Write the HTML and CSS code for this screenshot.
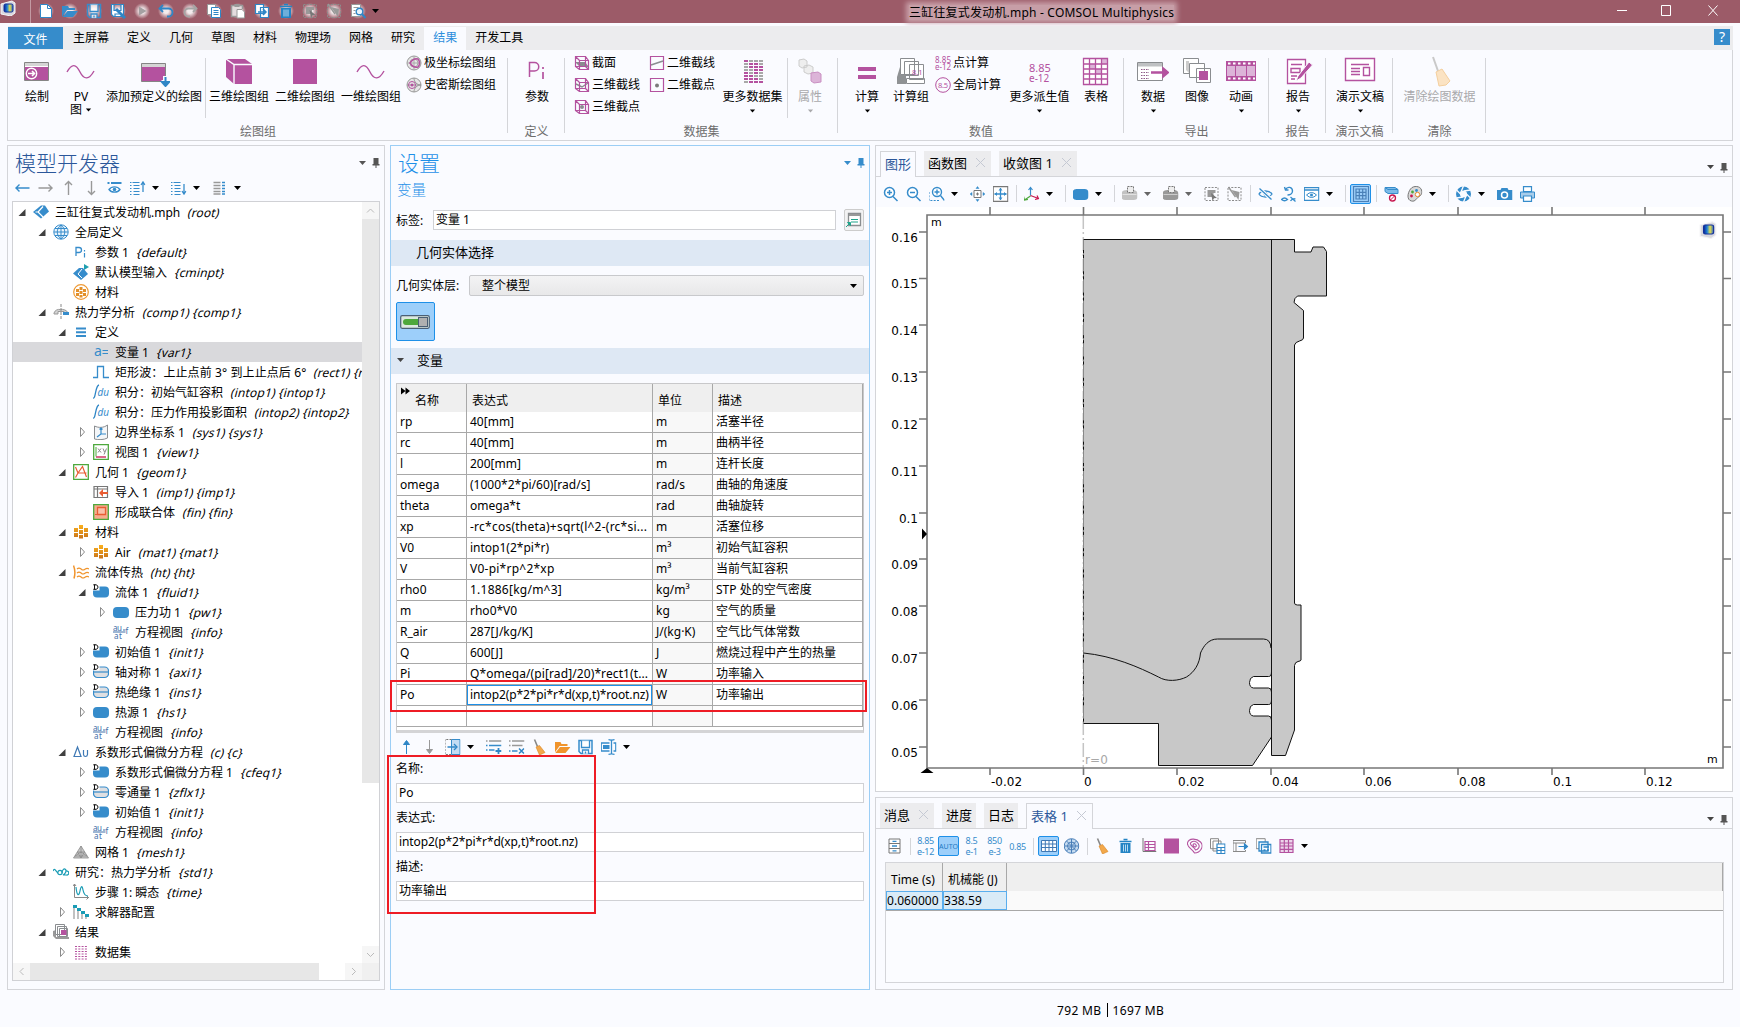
FILE: index.html
```html
<!DOCTYPE html>
<html lang="zh-CN">
<head>
<meta charset="utf-8">
<title>三缸往复式发动机.mph - COMSOL Multiphysics</title>
<link rel="stylesheet" href="styles.css">
</head>
<body>
<svg class="grads" aria-hidden="true">
  <defs>
    <linearGradient id="lg" x1="0" x2="1"><stop offset="0" stop-color="#0b1f8c"/><stop offset=".35" stop-color="#1c7fd8"/><stop offset=".65" stop-color="#e9e04a"/><stop offset="1" stop-color="#2b66c8"/></linearGradient>
    <linearGradient id="mat" x1="0" x2="0" y1="0" y2="1"><stop offset="0" stop-color="#fbb01c"/><stop offset="1" stop-color="#c8731a"/></linearGradient>
  </defs>
</svg>
<svg class="defs" aria-hidden="true">
  <symbol id="logo" viewBox="0 0 16 16"><path d="M1 4L12 1l3 2v10l-4 3-10-2z" fill="#d9d9de" stroke="#f4f4f6"/><rect x="4" y="4" width="9" height="8" rx="1.500" fill="url(#lg)" stroke="#12309c"/></symbol>
  <symbol id="caret" viewBox="0 0 9 16"><path d="M1 6h7L4.500 10z"/></symbol>
  <symbol id="pin" viewBox="0 0 10 16"><path d="M2.500 3h5v6h1v1.500h-3V13h-1v-2.500h-3V9h1z" fill="currentColor"/></symbol>
  <symbol id="open-tw" viewBox="0 0 10 16"><path d="M8.500 5v7h-7z" fill="#404040"/></symbol>
  <symbol id="shut-tw" viewBox="0 0 10 16"><path d="M3.500 3.500v9L7.500 8z" fill="#fff" stroke="#8a8a8a"/></symbol>
  <symbol id="new" viewBox="0 0 16 16"><path d="M2.500 1.500h7l4 4v9h-11z" fill="#fff" stroke="#2f86c6"/><path d="M9.500 1.500v4h4" fill="none" stroke="#2f86c6"/></symbol>
  <symbol id="open" viewBox="0 0 16 16"><path d="M0 3h6l1 2h6v2H5l-5 7z"/><path d="M5.500 8H16l-5 6H.800z"/></symbol>
  <symbol id="save" viewBox="0 0 16 16"><path d="M1.500 1.500h13v13h-11l-2-2z" fill="none" stroke="currentColor" stroke-width="1.500"/><path d="M4 1.500v7h8v-7M5 15v-4h6v4M8 12.500v2" fill="#fff" fill-opacity=".7" stroke="currentColor" stroke-width="1.300"/></symbol>
  <symbol id="saveas" viewBox="0 0 16 16"><path d="M1.500 1.500h12v12h-10l-2-2zM4 1.500v6h7v-6M5 14v-3h4" fill="#fff" stroke="#2f86c6" stroke-width="1.200"/><path d="M6 6l9 9" stroke="#2f86c6" stroke-width="3"/></symbol>
  <symbol id="play" viewBox="0 0 16 16"><path d="M5 3.500v9L12.500 8z" fill="#a5a0a2"/></symbol>
  <symbol id="undo" viewBox="0 0 16 16"><path d="M5 2L1.500 5.500 5 9M2 5.500h8.500a3.800 3.800 0 010 8H9" fill="none" stroke="#2f86c6" stroke-width="1.800"/></symbol>
  <symbol id="redo" viewBox="0 0 16 16"><path d="M11 2l3.500 3.500L11 9M14 5.500H6.500a3.800 3.800 0 000 8H8" fill="none" stroke="#a5a5a5" stroke-width="1.800"/></symbol>
  <symbol id="copy" viewBox="0 0 16 16"><path d="M1.500 1.500h8v10h-8z" fill="#fff" stroke="#999"/><path d="M5.500 4.500h7l2 2v8h-9z" fill="#fff" stroke="#2f86c6"/><path d="M7.500 7.500h5m-5 2h5m-5 2h5" stroke="#2f86c6"/></symbol>
  <symbol id="paste" viewBox="0 0 16 16"><path d="M6.500 13.500h-5v-11h11V6" fill="#e4dcde" stroke="#999" stroke-width="1.500"/><path d="M4.500 1h5v3h-5z" fill="#999"/><path d="M7 6.500h5l2.500 2.500v6H7z" fill="#fff" stroke="#999"/></symbol>
  <symbol id="dup" viewBox="0 0 16 16"><path d="M1.500 1.500h8v9h-8zM6.500 4.500h8v10h-8z" fill="#fff" stroke="#2f86c6" stroke-width="1.200"/><path d="M4 9h7M9 6l3 3-3 3" fill="none" stroke="#2f86c6" stroke-width="1.500"/></symbol>
  <symbol id="trash" viewBox="0 0 16 16"><path d="M2 3.500h12M6 1.500h4" stroke="#2484c4" stroke-width="1.600"/><path d="M3 5h10v10H3z" fill="#2484c4"/><path d="M6 6.500v7m2-7v7m2-7v7" stroke="#b7daf1"/></symbol>
  <symbol id="sel" viewBox="0 0 16 16"><path d="M1.500 1.500h13v13h-13z" fill="none" stroke="#8c8c8c" stroke-dasharray="2 1.300"/><path d="M4 4h8v3l-2 0v3l-2 1H4z" fill="#999"/><path d="M7.500 7l6 5-3 .3L9 15z" fill="#777"/></symbol>
  <symbol id="desel" viewBox="0 0 16 16"><path d="M1.500 1.500h13v13h-13z" fill="none" stroke="#8c8c8c" stroke-dasharray="2 1.300"/><path d="M5 4l7 10 1-8z" fill="#999"/><path d="M2 1l7 10" stroke="#999" stroke-width="1.500"/></symbol>
  <symbol id="find" viewBox="0 0 16 16"><path d="M1.500 1.500h9v12h-9z" fill="#fff" stroke="#999"/><path d="M3.500 4.500h5m-5 3h2m-2 3h2" stroke="#999"/><circle cx="9.500" cy="8.500" r="3.300" fill="#e8f3fb" stroke="#2f86c6" stroke-width="1.400"/><path d="M12 11l3.500 4" stroke="#2f86c6" stroke-width="2"/></symbol>

  <symbol id="r-plot" viewBox="0 0 32 32"><path d="M3.500 7.500h24v18h-24z" fill="#fff" stroke="#858585"/><path d="M4 8h23v3H4z" fill="#d5d5d5"/><path d="M4 12h23v13H4z" fill="#b4529f"/><circle cx="10.500" cy="18.500" r="5.200" fill="#b4529f" stroke="#fff" stroke-width="1.400"/><path d="M7 18.500h6M11 16l2.500 2.500L11 21" fill="none" stroke="#fff" stroke-width="1.600"/></symbol>
  <symbol id="r-wave" viewBox="0 0 32 32"><path d="M2 17c5-9 9-8 13 0s9 8 14-1" fill="none" stroke="#b4529f" stroke-width="1.400"/></symbol>
  <symbol id="r-add" viewBox="0 0 32 32"><path d="M3.500 8.500h24v18h-24z" fill="#b4529f" stroke="#858585"/><path d="M4 9h23v3H4z" fill="#d5d5d5"/><path d="M27.500 21v10M23.500 27.500h9" fill="none" stroke="#fafbff" stroke-width="5"/><path d="M27.500 22v8M24 27l3.500 4 3.500-4z" fill="#2f86c6" stroke="#2f86c6" stroke-width="2"/></symbol>
  <symbol id="r-cube" viewBox="0 0 32 32"><path d="M3 4h19l7 5v20H11l-8-7z" fill="#b4529f"/><path d="M3 4l8 5.500h18M11 9.500V29" fill="none" stroke="#fafbff" stroke-width="1.400"/></symbol>
  <symbol id="r-sq" viewBox="0 0 32 32"><path d="M4 4h24v25H4z" fill="#b4529f"/></symbol>
  <symbol id="r-pi" viewBox="0 0 32 32"><path d="M8.500 22V7.500h5a4 4 0 010 8.500h-5" fill="none" stroke="#b4529f" stroke-width="1.500"/><path d="M22 12v2m0 3v7" stroke="#b4529f" stroke-width="1.700"/></symbol>
  <symbol id="r-data" viewBox="0 0 32 32"><path d="M7 6h19M7 9h19M7 12h19M7 15h19M7 18h19M7 21h19M7 24h19M7 27h19" stroke="#a8a8a8" stroke-width="1.800" stroke-dasharray="4 1"/><path d="M7 6h4M12 9h9M12 12h14M17 15h9M7 18h4m6 0h4M7 21h9M7 24h4m1 0h9M12 27h14" stroke="#b4529f" stroke-width="1.800" stroke-dasharray="4 1"/></symbol>
  <symbol id="r-attr" viewBox="0 0 32 32"><g stroke="#ccc" fill="#eee"><path d="M5 5l5-1 3 2v6l-5 1-3-2zM10 11l5-1 4 2v6l-5 1-4-2z"/></g><path d="M17 18l7-1 3 2v8l-7 1-3-2z" fill="#dcb4d8" stroke="#c98fc2"/></symbol>
  <symbol id="r-eq" viewBox="0 0 32 32"><path d="M7 14h18M7 22h18" stroke="#b4529f" stroke-width="4"/></symbol>
  <symbol id="r-evg" viewBox="0 0 32 32"><path d="M5 12l-3 10v7h9V12z" fill="#8f9294"/><g fill="#fff" stroke="#8a8d90"><path d="M5.500 3.500h14v16h-14zM9.500 6.500h14v14h-14zM14.500 9.500h14v15h-14zM11.500 23.500h18v5h-18z"/></g><text x="17" y="19.500" font-size="7.500" class="mg">8.1</text></symbol>
  <symbol id="r-num" viewBox="0 0 32 32"><text x="5" y="17" font-size="11" class="mg">8.85</text><text x="5" y="27" font-size="10" class="mg">e-12</text></symbol>
  <symbol id="r-tab" viewBox="0 0 32 32"><path d="M3.500 3.500h24v26h-24z" fill="#fff"/><path d="M21 4h6v5h-6zM9 9h6v5H9zM15 14h6v5h-6z" fill="#dcb4d8"/><path d="M3.500 3.500h24v26h-24zM3.500 9h24M3.500 14h24M3.500 19h24M3.500 24h24M9.500 4v26M15.500 4v26M21.500 4v26" fill="none" stroke="#b4529f" stroke-width="1.300"/></symbol>
  <symbol id="r-exp" viewBox="0 0 32 32"><path d="M.500 7.500h25v18H.500z" fill="#fff" stroke="#8a8d90"/><path d="M1 8h24v3.500H1z" fill="#bfc1c3"/><path d="M4 14.500h8m-8 3h8m-8 3h8m-8 3h8" stroke="#8e5a88" stroke-width="1.200" stroke-dasharray="1.500 1"/><path d="M14 17.500h14M26.500 14l4 3.500-4 3.500z" stroke="#b4529f" stroke-width="2.600" fill="#b4529f"/></symbol>
  <symbol id="r-img" viewBox="0 0 32 32"><g fill="#fff" stroke="#8a8d90"><path d="M2.500 3.500h15v15h-15z"/><path d="M8.500 8.500h15v14h-15zM15.500 13.500h14v14h-14z"/></g><path d="M18 16h9v9h-9z" fill="#b4529f"/><path d="M5 6v9l3 3V6z" fill="#ccc"/></symbol>
  <symbol id="r-film" viewBox="0 0 32 32"><path d="M1 6h30v20H1z" fill="#b4529f"/><path d="M2 11h8v10H2zm9 0h10v10H11zm11 0h8v10h-8z" fill="#dcb4d8"/><path d="M3 8.500h27M3 23.500h27" stroke="#fff" stroke-width="2" stroke-dasharray="2.500 2.500"/></symbol>
  <symbol id="r-rep" viewBox="0 0 32 32"><path d="M5.500 4.500h18v24h-18z" fill="#fff" stroke="#b4529f" stroke-width="1.300"/><path d="M9 9.500h11M9 13.500h9v4H9zM9 21h6m-6 3h4" fill="none" stroke="#b4529f" stroke-width="1.400"/><path d="M14 26l2-5L27 7l3.500 3L19 23z" fill="#b4529f" stroke="#fafbff"/></symbol>
  <symbol id="r-pres" viewBox="0 0 32 32"><path d="M1.500 3.500h29v22h-29z" fill="#fff" stroke="#b4529f" stroke-width="1.400"/><path d="M7 9.500h18M7 13.500h9m-9 3h9m-9 3h9M19.500 12.500h6v8h-6z" fill="none" stroke="#b4529f" stroke-width="1.400"/></symbol>
  <symbol id="r-broom" viewBox="0 0 32 32"><path d="M9 2l5 14" stroke="#c9c9c9" stroke-width="2"/><path d="M12 17l6-3 8 12-4 4-7 1z" fill="#fbe3c3" stroke="#f4cf9e"/></symbol>

  <symbol id="polar" viewBox="0 0 16 16"><circle cx="8" cy="8" r="7" fill="#e6e6e6" stroke="#999"/><circle cx="8" cy="8" r="4" fill="none" stroke="#aaa"/><path d="M8 1v14M1 8h14" stroke="#aaa"/><path d="M4 8c2-3 5-5 8-4 2 2 2 6 0 8-3 1-6-1-8-4z" fill="none" stroke="#b4529f" stroke-width="1.500"/></symbol>
  <symbol id="smith" viewBox="0 0 16 16"><circle cx="8" cy="8" r="7" fill="#e6e6e6" stroke="#999"/><path d="M1 8h14M8 1c0 4 3 7 7 7M8 15c0-4 3-7 7-7" fill="none" stroke="#999"/><circle cx="6" cy="8" r="3.500" fill="none" stroke="#b4529f"/><circle cx="6" cy="8" r="1.500" fill="#b4529f"/></symbol>
  <symbol id="c-box" viewBox="0 0 16 16"><path d="M1.500 1.500h10v10h-10zM5.500 5.500h9v9h-9zM1.500 1.500l4 4M11.500 1.500l3 4M1.500 11.500l4 3M11.500 11.500l3 3" fill="none" stroke="#b4529f" stroke-width="1.200"/></symbol>
  <symbol id="c-sec" viewBox="0 0 16 16"><path d="M1 7h10l4 5H6z" fill="#8a8d90"/><use href="#c-box"/></symbol>
  <symbol id="c-line" viewBox="0 0 16 16"><path d="M2 7l6 3 6-4" fill="none" stroke="#8a8d90" stroke-width="1.500"/><use href="#c-box"/></symbol>
  <symbol id="c-pt" viewBox="0 0 16 16"><circle cx="8" cy="8" r="2" fill="#8a8d90"/><use href="#c-box"/></symbol>
  <symbol id="s-line" viewBox="0 0 16 16"><path d="M1.500 1.500h13v13h-13z" fill="none" stroke="#b4529f" stroke-width="1.200"/><path d="M2 10l12-4" stroke="#8a8d90" stroke-width="1.500"/></symbol>
  <symbol id="s-pt" viewBox="0 0 16 16"><path d="M1.500 1.500h13v13h-13z" fill="none" stroke="#b4529f" stroke-width="1.200"/><circle cx="8" cy="8.500" r="2" fill="#7a7a7a"/></symbol>
  <symbol id="n-pt" viewBox="0 0 16 16"><text x="0" y="7.500" font-size="8" class="mg" textLength="16">8.85</text><text x="0" y="14.500" font-size="8" class="mg" textLength="16">e-12</text></symbol>
  <symbol id="n-gl" viewBox="0 0 16 16"><circle cx="8" cy="8" r="7.300" fill="none" stroke="#b4529f"/><text x="3" y="11" font-size="7.500" class="mg" textLength="10">8.5</text></symbol>

  <symbol id="a-l" viewBox="0 0 16 16"><path d="M1 8h14M5 4.500L1.500 8 5 11.500" fill="none" stroke="currentColor" stroke-width="1.400"/></symbol>
  <symbol id="a-r" viewBox="0 0 16 16"><path d="M1 8h14M11 4.500L14.500 8 11 11.500" fill="none" stroke="currentColor" stroke-width="1.400"/></symbol>
  <symbol id="a-u" viewBox="0 0 16 16"><path d="M8 15V1.500M4.500 5L8 1.500 11.500 5" fill="none" stroke="currentColor" stroke-width="1.400"/></symbol>
  <symbol id="a-d" viewBox="0 0 16 16"><path d="M8 1v13.500M4.500 11L8 14.500l3.500-3.500" fill="none" stroke="currentColor" stroke-width="1.400"/></symbol>
  <symbol id="f-u" viewBox="0 0 16 16"><path d="M8 15V3M8 1.500L5 5.500h6z" fill="#2f86c6" stroke="#2f86c6"/></symbol>
  <symbol id="f-d" viewBox="0 0 16 16"><path d="M8 1v12M8 14.500l-3-4h6z" fill="#999" stroke="#999"/></symbol>
  <symbol id="show" viewBox="0 0 16 16"><path d="M1 3h2m1.500 0H15" stroke="#368ccb" stroke-width="2"/><path d="M2.500 9.500C5 6 11 6 13.500 9.500 11 13 5 13 2.500 9.500z" fill="#fff" stroke="#368ccb" stroke-width="1.300"/><circle cx="8" cy="9.500" r="1.800" fill="#368ccb"/></symbol>
  <symbol id="l-up" viewBox="0 0 16 16"><path d="M0 2.500h2m1 0h7M0 5.500h2m2 0h6M0 8.500h2m2 0h6M0 11.500h2m2 0h6M0 14.500h2m2 0h6" stroke="#368ccb" stroke-width="1.200"/><path d="M13.500 12V2M11.500 5l2-3 2 3" fill="none" stroke="#368ccb" stroke-width="1.300"/></symbol>
  <symbol id="l-dn" viewBox="0 0 16 16"><path d="M0 2.500h2m1 0h7M0 5.500h2m2 0h6M0 8.500h2m2 0h6M0 11.500h2m2 0h6M0 14.500h2m2 0h6" stroke="#368ccb" stroke-width="1.200"/><path d="M13.500 4v10M11.500 11l2 3 2-3" fill="none" stroke="#368ccb" stroke-width="1.300"/></symbol>
  <symbol id="l-col" viewBox="0 0 16 16"><path d="M2 2.500h7M2 5.500h7M2 8.500h7M2 11.500h7M2 14h7" stroke="#999" stroke-width="1.500"/><path d="M10.500 2.500h3M10.500 5.500h3M10.500 8.500h3M10.500 11.500h3M10.500 14h3" stroke="#368ccb" stroke-width="1.500"/></symbol>

  <symbol id="t-root" viewBox="0 0 16 16"><path d="M8 1.500h4L16 7.500 8 14.500 0 8z" fill="#368ccb"/><path d="M10 2.500L5 8l5 5M5.500 8h-3" fill="none" stroke="#fff" stroke-width="1.200"/></symbol>
  <symbol id="t-globe" viewBox="0 0 16 16"><circle cx="8" cy="8" r="7.200" fill="#eaf4fc" stroke="#368ccb"/><path d="M8 1v14M1 8h14M2 4.500h12M2 11.500h12M8 1c-5 4-5 10 0 14M8 1c5 4 5 10 0 14" fill="none" stroke="#368ccb"/></symbol>
  <symbol id="t-pi" viewBox="0 0 16 16"><path d="M3 12V3.500h3a2.400 2.400 0 010 5H3" fill="none" stroke="#368ccb" stroke-width="1.300"/><path d="M11.500 6v1.500m0 1.500v4.500" stroke="#368ccb" stroke-width="1.200"/></symbol>
  <symbol id="t-cm" viewBox="0 0 16 16"><path d="M6 4h4l5 6-7 6-8-6.500z" fill="#368ccb"/><path d="M9 5L5 10l4 4" fill="none" stroke="#fff"/><path d="M11 0v6l5-3z" fill="#1f9fb0"/></symbol>
  <symbol id="t-matg" viewBox="0 0 16 16"><circle cx="8" cy="8" r="7.300" fill="#fff" stroke="#ef9a35" stroke-width="1.200"/><path d="M6.500 3h3v3h-3zM3 5h3v3H3zm7 0h3v3h-3zM6.500 7h3v3h-3zM3 9h3v3H3zm7 0h3v3h-3zM6.500 11h3v2.500h-3z" fill="#e3902a"/></symbol>
  <symbol id="t-comp" viewBox="0 0 16 16"><path d="M1 9c1-3 4-4 6.500-3.500C10 5 14 6 15 9h-4V7.500H5V10H1z" fill="#d4d4d4" stroke="#999"/><path d="M8 0v16" stroke="#888" stroke-dasharray="3 1"/><path d="M10 8h6v3h-6z" fill="#368ccb"/></symbol>
  <symbol id="t-def" viewBox="0 0 16 16"><path d="M3 4.500h10M3 8.300h10M3 12h10" stroke="#368ccb" stroke-width="2"/></symbol>
  <symbol id="t-var" viewBox="0 0 16 16"><text x="1" y="12" font-size="14" class="bl">a</text><path d="M9.500 6.500H15M9.500 9.500H15" stroke="#368ccb" stroke-width="1.200"/></symbol>
  <symbol id="t-rect" viewBox="0 0 16 16"><path d="M0 13.500h4.500V2.500h6v11H16" fill="none" stroke="#368ccb" stroke-width="1.300"/></symbol>
  <symbol id="t-int" viewBox="0 0 16 16"><path d="M0 14c3 1 2-12 6-13" fill="none" stroke="#2f86c6" stroke-width="1.300"/><text x="4.500" y="12" font-size="10" class="bl it" textLength="11.500" lengthAdjust="spacingAndGlyphs">du</text></symbol>
  <symbol id="t-sys" viewBox="0 0 16 16"><path d="M1.500 2c4 2 9 2 13-1v13c-4 2-9 2-13 1z" fill="#f4f6f8" stroke="#8a8d90"/><path d="M8 4v6h5M8 10l-4 3M6.500 5.500L8 4l1.500 1.500" fill="none" stroke="#368ccb" stroke-width="1.200"/></symbol>
  <symbol id="t-view" viewBox="0 0 16 16"><path d="M.700.700h14.600v14.600H.700z" fill="#fff" stroke="#4ea83c" stroke-width="1.300"/><path d="M3 3v9.500" stroke="#4ea83c"/><path d="M3 13h10" stroke="#c8164e" stroke-width="1.300"/><path d="M5 4.500l3 4m0-4l-3 4M10 4.500l1.500 3.500M13.500 4.500L11 10.500" stroke="#888" fill="none"/></symbol>
  <symbol id="t-geom" viewBox="0 0 16 16"><path d="M.700.700h14.600v14.600H.700z" fill="#fff" stroke="#4ea83c" stroke-width="1.300"/><path d="M2.500 3L5 9l-2.500 4.500M5 9L9.500 2.500 13.500 13M5 9h8.500" fill="none" stroke="#e85c33" stroke-width="1.200"/></symbol>
  <symbol id="t-imp" viewBox="0 0 16 16"><path d="M1 2.500h13.500v11H1zM1 5h13.500M4.500 3v10.500" fill="#fff" stroke="#777" stroke-width="1.200"/><path d="M6 9l4-4v8z" fill="#e85c33"/><path d="M7 9h8" stroke="#e85c33" stroke-width="2"/></symbol>
  <symbol id="t-fin" viewBox="0 0 16 16"><path d="M.700.700h14.600v14.600H.700z" fill="#f7ab8e" stroke="#4ea83c" stroke-width="1.300"/><path d="M4.500 3.500h8v7h-8z" fill="#f9c0aa" stroke="#e85c33" stroke-width="1.300"/><path d="M2 10.500h3" stroke="#e85c33"/></symbol>
  <symbol id="t-mat" viewBox="0 0 16 16"><path d="M6 1h4v4H6zM1 4h4v4H1zm10 0h4v4h-4zM6 6h4v4H6zM1 9h4v4H1zm10 0h4v4h-4zM6 11h4v3.500H6z" fill="url(#mat)"/></symbol>
  <symbol id="t-ht" viewBox="0 0 16 16"><path d="M.500 1.500c2 5 2 8 .5 13" fill="none" stroke="#f0942c" stroke-width="1.500"/><path d="M4 5c3-3 4 1 6 1s3-3 6-1M4 9c3-3 4 1 6 1s3-3 6-1M4 13c3-3 4 1 6 1s3-3 6-1" fill="none" stroke="#f0942c" stroke-width="1.200"/></symbol>
  <symbol id="t-dom" viewBox="0 0 16 16"><rect y="3" width="16" height="11" rx="4" fill="#368ccb"/></symbol>
  <symbol id="t-D" viewBox="0 0 16 16"><rect y="0" x="0" width="6.500" height="6.500" fill="#fff"/><path d="M1.500.800v4.500h1.600q1.900-.4 1.900-2.200T3.100.800zM.300.800h2M.300 5.300h2" fill="none" stroke="#111"/></symbol>
  <symbol id="t-dd" viewBox="0 0 16 16"><rect y="2.500" width="16" height="11" rx="4" fill="#368ccb"/><use href="#t-D"/></symbol>
  <symbol id="t-bd" viewBox="0 0 16 16"><rect x=".5" y="3" width="15" height="10.500" rx="4" fill="#dedfe2" stroke="#368ccb" stroke-width="1.200"/><path d="M1 8h14" stroke="#368ccb" stroke-width="1.200"/><use href="#t-D"/></symbol>
  <symbol id="t-eqv" viewBox="0 0 16 16"><g class="dk"><text x="0" y="6.500" font-size="8" textLength="9">au</text><text x="1" y="14.500" font-size="8" textLength="8">at</text><text x="12.500" y="9.500" font-size="8">f</text></g><path d="M0 8h10M10 6h2.500M10 8h2.500" stroke="#3f6ea8"/></symbol>
  <symbol id="t-du" viewBox="0 0 16 16"><path d="M1 12.500L4.500 3 8 12.500z" fill="none" stroke="#3f79b5" stroke-width="1.200"/><path d="M10.500 6v4.500q.200 2 2 2t2-2V6" fill="none" stroke="#3f79b5" stroke-width="1.200"/></symbol>
  <symbol id="t-mesh" viewBox="0 0 16 16"><path d="M8 2l7.500 12H.500zM4.500 8h7L8 14zM8 2v12M2 12l6-4 6 4z" fill="#c8c8c8" stroke="#8a8a8a" stroke-width=".8"/></symbol>
  <symbol id="t-std" viewBox="0 0 16 16"><path d="M0 7c2-4 3 1 5 2" fill="none" stroke="#1a9cb5" stroke-width="1.200"/><circle cx="7" cy="8.500" r="2.200" fill="none" stroke="#1a9cb5" stroke-width="1.200"/><path d="M9 9c0-3 2-5 3.500-3.500S12 10 10 11h3.500a2 2 0 10-1-3.500" fill="none" stroke="#1a9cb5" stroke-width="1.200"/></symbol>
  <symbol id="t-time" viewBox="0 0 16 16"><path d="M1.500 0v13.500H16M13.500 11.500l2 2-2 2M0 2l1.500-2L3 2" fill="none" stroke="#888"/><path d="M3 3c1 10 3 9 4 4s2-6 3-1 3 6 5 6" fill="none" stroke="#1a9cb5" stroke-width="1.200"/></symbol>
  <symbol id="t-solv" viewBox="0 0 16 16"><path d="M1 3v12M5 6v9M9 9v6M13 12v3" stroke="#999" stroke-width="1.200"/><path d="M0 1h4v3H0zM4 4h4v3H4zM8 7h4v3H8zM12 10h4v3h-4z" fill="#1a9cb5"/></symbol>
  <symbol id="t-res" viewBox="0 0 16 16"><path d="M0 7l3-1v7h13v2H3L0 12z" fill="#999"/><path d="M2.500.500h9v10h-9zM4.500 2.500h9v10h-9zM6.500 4.500h8v8h-8z" fill="#fff" stroke="#8a8d90"/><path d="M8 6h5.500v5H8z" fill="#b4529f"/></symbol>
  <symbol id="t-data" viewBox="0 0 16 16"><path d="M2 2.500h12M2 5h12M2 7.500h12M2 10h12M2 12.500h12M2 15h12" stroke="#b4529f" stroke-width="1.200" stroke-dasharray="2 1.300"/></symbol>

  <symbol id="goto" viewBox="0 0 16 16"><path d="M2.500 1.500h12v12h-12z" fill="#fff" stroke="#8a8d90" stroke-width="1.300"/><path d="M3 2h11v2H3z" fill="#999"/><path d="M5 7.500h7m-7 2.500h7" stroke="#20a48c" stroke-width="1.200"/><path d="M0 15l3.500-3.500M1.500 10.500h3v3z" fill="#20a48c" stroke="#20a48c"/></symbol>
  <symbol id="m-ins" viewBox="0 0 16 16"><path d="M7 .5h8.500v15H7z" fill="#c3dcf3" stroke="#368ccb"/><path d="M7 .5H.500v15H7" fill="none" stroke="#777" stroke-dasharray="2 1.200"/><path d="M3 8h8M9.500 5l3 3-3 3" fill="none" stroke="#2f86c6" stroke-width="1.300"/></symbol>
  <symbol id="m-add" viewBox="0 0 16 16"><path d="M0 2h2m1.500 0H16" stroke="#999" stroke-width="1.500"/><path d="M0 6.500h2m1.500 0H16M0 11h2m1.500 0H9" stroke="#368ccb" stroke-width="1.500"/><path d="M10 12h6M13 9v6" stroke="#2f86c6" stroke-width="1.800"/></symbol>
  <symbol id="m-del" viewBox="0 0 16 16"><path d="M0 2h2m1.500 0H16M0 6.500h2m1.500 0H14" stroke="#999" stroke-width="1.500"/><path d="M0 12h2m1.500 0H9" stroke="#368ccb" stroke-width="1.500"/><path d="M10.500 9.500l5 5m0-5l-5 5" stroke="#2f86c6" stroke-width="1.500"/></symbol>
  <symbol id="broom" viewBox="0 0 16 16"><path d="M3 .5l3 7" stroke="#888" stroke-width="1.600"/><path d="M4.500 8L8 6.500l5.500 7L8 16z" fill="#f2a84b" stroke="#d98522" stroke-width=".6"/></symbol>
  <symbol id="m-ren" viewBox="0 0 16 16"><path d="M9 4H.700v8H9M13 4h2.300v8H13M11 1v14M8 .700q3 0 3 1 0-1 3-1M8 15.300q3 0 3-1 0 1 3 1" fill="none" stroke="#368ccb" stroke-width="1.300"/><path d="M2.500 6H9v4H2.500z" fill="#368ccb"/></symbol>

  <symbol id="g-zi" viewBox="0 0 16 16"><circle cx="7" cy="6.500" r="5" fill="#fff" stroke="#368ccb" stroke-width="1.500"/><path d="M4.500 6.500h5M7 4v5M10.500 10.500L15 15" stroke="#368ccb" stroke-width="1.500"/></symbol>
  <symbol id="g-zo" viewBox="0 0 16 16"><circle cx="7" cy="6.500" r="5" fill="#fff" stroke="#368ccb" stroke-width="1.500"/><path d="M4.500 6.500h5M10.500 10.500L15 15" stroke="#368ccb" stroke-width="1.500"/></symbol>
  <symbol id="g-zb" viewBox="0 0 16 16"><path d="M.500 6v8.500h11" fill="none" stroke="#368ccb" stroke-dasharray="2 1.300"/><circle cx="8.500" cy="6" r="4.500" fill="#fff" stroke="#368ccb" stroke-width="1.400"/><path d="M6 6h5M8.500 3.500v5M12 9.500l4 5" stroke="#368ccb" stroke-width="1.400"/></symbol>
  <symbol id="g-ext" viewBox="0 0 16 16"><path d="M4.500 4.500h7v7h-7zM8 6.500v3M6.500 8h3" fill="#fff" stroke="#777"/><path d="M6.500 2.500L8 .500l1.500 2zM6.500 13.500L8 15.500l1.500-2zM2.500 6.500L.500 8l2 1.500zM13.500 6.500L15.500 8l-2 1.500z" fill="#368ccb" stroke="#368ccb" stroke-width=".5"/></symbol>
  <symbol id="g-fit" viewBox="0 0 16 16"><path d="M.700.700h14.600v14.600H.700z" fill="#fff" stroke="#777" stroke-width="1.200"/><path d="M8 2v12M2 8h12" stroke="#368ccb" stroke-width="1.300"/><path d="M6 4.500L8 2l2 2.500zM6 11.500L8 14l2-2.500zM4.500 6L2 8l2.500 2zM11.500 6L14 8l-2.500 2z" fill="#368ccb"/></symbol>
  <symbol id="g-axis" viewBox="0 0 16 16"><path d="M7 9.500V1.500M5 4l2-2.500L9 4" fill="none" stroke="#368ccb" stroke-width="1.200"/><path d="M7 10L1 14M0 10.500L1 14l3.500-.5" fill="none" stroke="#4ea83c" stroke-width="1.200"/><path d="M7 9.500l8 3M13.500 9.500l1.500 3-3.500 1" fill="none" stroke="#c8164e" stroke-width="1.200"/></symbol>
  <symbol id="g-lock" viewBox="0 0 16 16"><path d="M0 8q0-4 5-4h6q5 0 5 4v3q0 3-4 3H4q-4 0-4-3z" fill="currentColor"/><path d="M1 8.500h14" stroke="#fff" stroke-opacity=".5"/><path d="M6 .5h6v6H6z" fill="#eee" stroke="#777" stroke-dasharray="2 1"/></symbol>
  <symbol id="g-hide" viewBox="0 0 16 16"><path d="M1.500 8C4 4 12 4 14.500 8 12 12 4 12 1.500 8z" fill="none" stroke="#368ccb" stroke-width="1.300"/><circle cx="8" cy="8" r="2" fill="#368ccb"/><path d="M2 2.500l12 11" stroke="#fafbff" stroke-width="3.500"/><path d="M2 2.500l12 11" stroke="#368ccb" stroke-width="1.300"/></symbol>
  <symbol id="g-reset" viewBox="0 0 16 16"><path d="M5 3.500C7 0 12 1 12 5c0 3-3 4-5 4M4 1l1 3 3 0" fill="none" stroke="#368ccb" stroke-width="1.400"/><path d="M1 13.500q3-3 6 0-3 2.500-6 0zM10 11l5 4.500M10 15q2-3 5-2" fill="none" stroke="#368ccb" stroke-width="1.300"/></symbol>
  <symbol id="g-eye" viewBox="0 0 16 16"><path d="M.700 1.700h14.600v12.600H.700zM.700 4h14.600" fill="#fff" stroke="#368ccb" stroke-width="1.300"/><path d="M3 9q5-5 10 0-5 5-10 0z" fill="none" stroke="#368ccb"/><circle cx="8" cy="9" r="1.500" fill="#368ccb"/></symbol>
  <symbol id="g-grid" viewBox="0 0 16 16"><path d="M.500.500h15v15H.500zM3 3v10h10V3zM6.300 3v10M9.700 3v10M3 6.300h10M3 9.700h10" fill="none" stroke="#4a80b8" stroke-width="1.200"/></symbol>
  <symbol id="g-clr" viewBox="0 0 16 16"><path d="M1.500 1.500h10l3 2v4h-10l-3-2z" fill="#7cbbe8" stroke="#368ccb"/><path d="M1.500 1.500l3 2h10" fill="none" stroke="#368ccb"/><circle cx="9" cy="12" r="3" fill="#fff" stroke="#c8164e" stroke-width="1.300"/><path d="M7 14l4-4" stroke="#c8164e"/></symbol>
  <symbol id="g-pal" viewBox="0 0 16 16"><path d="M5 15C0 14 1 7 4 3s10-3 11 1-1 6-3 7-3 5-7 4z" fill="#d9d9d9" stroke="#777"/><circle cx="6" cy="6" r="1.400" fill="#4ea83c"/><circle cx="10" cy="4.500" r="1.400" fill="#368ccb"/><circle cx="5" cy="10" r="1.400" fill="#c8164e"/><circle cx="11" cy="8.500" r="2.200" fill="#fff" stroke="#e88a2c"/></symbol>
  <symbol id="g-shut" viewBox="0 0 16 16"><circle cx="8" cy="8" r="5.500" fill="none" stroke="#368ccb" stroke-width="4"/><path d="M8 0l-3 7M15 4L8.500 5M15 12l-5-5M8 16l3-7M1 12l6.500-1M1 4l5 5" stroke="#fafbff" stroke-width="1.300"/></symbol>
  <symbol id="g-cam" viewBox="0 0 16 16"><path d="M0 4h4l1-2h6l1 2h4v10H0z" fill="#368ccb"/><circle cx="8" cy="9" r="3" fill="none" stroke="#fff" stroke-width="1.500"/></symbol>
  <symbol id="g-prn" viewBox="0 0 16 16"><path d="M1 6h14v6H1z" fill="#a9cdea" stroke="#368ccb"/><path d="M4 .7h8v5H4zM4 10h8v5.300H4z" fill="#fff" stroke="#368ccb" stroke-width="1.200"/></symbol>

  <symbol id="b-full" viewBox="0 0 16 16"><path d="M2.500 1h11v14h-11zM2.500 5.500h11M2.500 10.500h11" fill="#fff" stroke="#777"/><path d="M5.500 8h5M6 3.300h4M6 12.800h4" stroke="#368ccb" stroke-width="1.300"/></symbol>
  <symbol id="b-tab" viewBox="0 0 16 16"><path d="M.500 2.500h15v11H.500z" fill="#fff"/><path d="M.500 2.500h15v11H.500zM.500 6h15M.500 9.500h15M4.300 2.500v11M8 2.500v11M11.700 2.500v11" fill="none" stroke="#3f79b5"/></symbol>
  <symbol id="b-pol" viewBox="0 0 16 16"><circle cx="8" cy="8" r="7.300" fill="#c5dbf0" stroke="#4a7fb8"/><circle cx="8" cy="8" r="4" fill="none" stroke="#4a7fb8"/><path d="M8 1v14M1 8h14M3 3l10 10M13 3L3 13" stroke="#4a7fb8"/></symbol>
  <symbol id="b-tg" viewBox="0 0 16 16"><path d="M2.500 0v13.500H16" fill="none" stroke="#777"/><path d="M4.500 3.500h10v9h-10zM4.500 6.500h10m-10 3h10M8 3.500v9" fill="none" stroke="#b4529f" stroke-width="1.200"/></symbol>
  <symbol id="b-sq" viewBox="0 0 16 16"><path d="M.500.500h15v15H.500z" fill="#b4529f"/></symbol>
  <symbol id="b-cont" viewBox="0 0 16 16"><path d="M1 5c1-5 9-5 13-1s0 11-6 11c-2-4-8-6-7-10zM4 5c2-3 6-2 8 1s-1 6-3 6c-1-3-6-4-5-7zM7 6c2-1 4 2 2 3-2 0-3-2-2-3z" fill="none" stroke="#b4529f" stroke-width="1.100"/></symbol>
  <symbol id="b-copy" viewBox="0 0 16 16"><path d="M1 .7h8v10H1zM3.500 3h8v10h-8z" fill="#fff" stroke="#888"/><path d="M7.500 6h8v9.500h-8zM7.500 9.500h8m-8 3h8m-4-3v6" fill="#fff" stroke="#2f86c6" stroke-width="1.200"/></symbol>
  <symbol id="b-exp" viewBox="0 0 16 16"><path d="M13 5V2.500H.500v11H13V12M.500 5H13M3.500 5v8.500" fill="none" stroke="#888"/><path d="M6 8.500h7M12 6l3 2.500-3 2.500z" stroke="#2f86c6" stroke-width="1.200" fill="#2f86c6"/></symbol>
  <symbol id="b-dup" viewBox="0 0 16 16"><path d="M.700.700h9v10h-9z" fill="#fff" stroke="#888"/><path d="M3.500 4h9v9h-9zM6 6.500h9.500V15H6zM8 9h5.500m-5.500 3h2m1.500 0h2" fill="#fff" stroke="#2f86c6" stroke-width="1.300"/></symbol>
  <symbol id="b-grid" viewBox="0 0 16 16"><path d="M1.500 1.500h13v13h-13z" fill="#ecd5ea"/><path d="M1.500 1.500h13v13h-13zM1.500 5h13m-13 3h13m-13 3.300h13M5.800 1.500v13M10 1.500v13" fill="none" stroke="#b4529f" stroke-width="1.200"/></symbol>
</svg>

<header class="titlebar">
  <svg class="i app"><use href="#logo"/></svg>
  <div class="quick">
    <svg class="i"><use href="#new"/></svg><svg class="i bl"><use href="#open"/></svg><svg class="i blc"><use href="#save"/></svg><svg class="i"><use href="#saveas"/></svg><svg class="i"><use href="#play"/></svg><svg class="i"><use href="#undo"/></svg><svg class="i"><use href="#redo"/></svg><svg class="i"><use href="#copy"/></svg><svg class="i"><use href="#paste"/></svg><svg class="i"><use href="#dup"/></svg><svg class="i"><use href="#trash"/></svg><svg class="i"><use href="#sel"/></svg><svg class="i"><use href="#desel"/></svg><svg class="i"><use href="#find"/></svg>
  </div>
  <svg class="car"><use href="#caret"/></svg>
  <h1><span>三缸往复式发动机.mph - COMSOL Multiphysics</span></h1>
  <svg class="win" viewBox="0 0 110 23"><path d="M1 10.500h10M45.500 5.500h9v10h-9zM92.500 5.500l9 10m0-10l-9 10" fill="none" stroke="#fff"/></svg>
</header>

<nav class="tabs">
  <b class="file">文件</b><span>主屏幕</span><span>定义</span><span>几何</span><span>草图</span><span>材料</span><span>物理场</span><span>网格</span><span>研究</span><span class="on">结果</span><span>开发工具</span><b class="help">?</b>
</nav>

<section class="ribbon">
  <div class="grp g1">
    <div class="body">
      <div class="btn w44"><svg><use href="#r-plot"/></svg>绘制</div>
      <div class="btn w44"><svg><use href="#r-wave"/></svg>PV<em>图 <svg class="car"><use href="#caret"/></svg></em></div>
      <div class="btn w102"><svg><use href="#r-add"/></svg>添加预定义的绘图</div>
      <hr>
      <div class="btn w66"><svg><use href="#r-cube"/></svg>三维绘图组</div>
      <div class="btn w66"><svg><use href="#r-sq"/></svg>二维绘图组</div>
      <div class="btn w66"><svg><use href="#r-wave"/></svg>一维绘图组</div>
      <div class="col"><p><svg class="i"><use href="#polar"/></svg>极坐标绘图组</p><p><svg class="i"><use href="#smith"/></svg>史密斯绘图组</p></div>
    </div><footer>绘图组</footer>
  </div>
  <div class="grp g2"><div class="body"><div class="btn w44"><svg><use href="#r-pi"/></svg>参数</div></div><footer>定义</footer></div>
  <div class="grp g3">
    <div class="body">
      <div class="col ca"><p><svg class="i"><use href="#c-sec"/></svg>截面</p><p><svg class="i"><use href="#c-line"/></svg>三维截线</p><p><svg class="i"><use href="#c-pt"/></svg>三维截点</p></div>
      <div class="col cb"><p><svg class="i"><use href="#s-line"/></svg>二维截线</p><p><svg class="i"><use href="#s-pt"/></svg>二维截点</p></div>
      <div class="btn w69"><svg><use href="#r-data"/></svg>更多数据集<svg class="car"><use href="#caret"/></svg></div>
      <hr>
      <div class="btn w44 off"><svg><use href="#r-attr"/></svg>属性<svg class="car"><use href="#caret"/></svg></div>
    </div><footer>数据集</footer>
  </div>
  <div class="grp g4">
    <div class="body">
      <div class="btn w44"><svg><use href="#r-eq"/></svg>计算<svg class="car"><use href="#caret"/></svg></div>
      <div class="btn w44"><svg><use href="#r-evg"/></svg>计算组</div>
      <div class="col cc"><p><svg class="i"><use href="#n-pt"/></svg>点计算</p><p><svg class="i"><use href="#n-gl"/></svg>全局计算</p></div>
      <div class="btn w69"><svg><use href="#r-num"/></svg>更多派生值<svg class="car"><use href="#caret"/></svg></div>
      <div class="btn w44"><svg><use href="#r-tab"/></svg>表格</div>
    </div><footer>数值</footer>
  </div>
  <div class="grp g5">
    <div class="body">
      <div class="btn w44"><svg><use href="#r-exp"/></svg>数据<svg class="car"><use href="#caret"/></svg></div>
      <div class="btn w44"><svg><use href="#r-img"/></svg>图像</div>
      <div class="btn w44"><svg><use href="#r-film"/></svg>动画<svg class="car"><use href="#caret"/></svg></div>
    </div><footer>导出</footer>
  </div>
  <div class="grp g6"><div class="body"><div class="btn w44"><svg><use href="#r-rep"/></svg>报告<svg class="car"><use href="#caret"/></svg></div></div><footer>报告</footer></div>
  <div class="grp g7"><div class="body"><div class="btn w66"><svg><use href="#r-pres"/></svg>演示文稿<svg class="car"><use href="#caret"/></svg></div></div><footer>演示文稿</footer></div>
  <div class="grp g8"><div class="body"><div class="btn w90 off"><svg><use href="#r-broom"/></svg>清除绘图数据</div></div><footer>清除</footer></div>
</section>

<main>
  <section class="panel builder">
    <div class="head"><h2>模型开发器</h2><svg class="car"><use href="#caret"/></svg><svg class="pin"><use href="#pin"/></svg></div>
    <div class="bar">
      <svg class="i blc"><use href="#a-l"/></svg><svg class="i gy"><use href="#a-r"/></svg><svg class="i gy"><use href="#a-u"/></svg><svg class="i gy"><use href="#a-d"/></svg><svg class="i"><use href="#show"/></svg><svg class="i"><use href="#l-up"/></svg><svg class="car"><use href="#caret"/></svg><svg class="i"><use href="#l-dn"/></svg><svg class="car"><use href="#caret"/></svg><svg class="i"><use href="#l-col"/></svg><svg class="car"><use href="#caret"/></svg>
    </div>
    <div class="tree">
      <ul>
        <li class="l0"><svg class="tw"><use href="#open-tw"/></svg><svg class="i"><use href="#t-root"/></svg>三缸往复式发动机.mph<i>(root)</i></li>
        <li class="l1"><svg class="tw"><use href="#open-tw"/></svg><svg class="i"><use href="#t-globe"/></svg>全局定义</li>
        <li class="l2"><svg class="tw"></svg><svg class="i"><use href="#t-pi"/></svg>参数 1<i>{default}</i></li>
        <li class="l2"><svg class="tw"></svg><svg class="i"><use href="#t-cm"/></svg>默认模型输入<i>{cminpt}</i></li>
        <li class="l2"><svg class="tw"></svg><svg class="i"><use href="#t-matg"/></svg>材料</li>
        <li class="l1"><svg class="tw"><use href="#open-tw"/></svg><svg class="i"><use href="#t-comp"/></svg>热力学分析<i>(comp1) {comp1}</i></li>
        <li class="l2"><svg class="tw"><use href="#open-tw"/></svg><svg class="i"><use href="#t-def"/></svg>定义</li>
        <li class="l3 sel"><svg class="tw"></svg><svg class="i"><use href="#t-var"/></svg>变量 1<i>{var1}</i></li>
        <li class="l3"><svg class="tw"></svg><svg class="i"><use href="#t-rect"/></svg><span class="rw">矩形波：上止点前 3° 到上止点后 6°</span><i>(rect1) {rect1}</i></li>
        <li class="l3"><svg class="tw"></svg><svg class="i"><use href="#t-int"/></svg>积分：初始气缸容积<i>(intop1) {intop1}</i></li>
        <li class="l3"><svg class="tw"></svg><svg class="i"><use href="#t-int"/></svg>积分：压力作用投影面积<i>(intop2) {intop2}</i></li>
        <li class="l3"><svg class="tw"><use href="#shut-tw"/></svg><svg class="i"><use href="#t-sys"/></svg>边界坐标系 1<i>(sys1) {sys1}</i></li>
        <li class="l3"><svg class="tw"><use href="#shut-tw"/></svg><svg class="i"><use href="#t-view"/></svg>视图 1<i>{view1}</i></li>
        <li class="l2"><svg class="tw"><use href="#open-tw"/></svg><svg class="i"><use href="#t-geom"/></svg>几何 1<i>{geom1}</i></li>
        <li class="l3"><svg class="tw"></svg><svg class="i"><use href="#t-imp"/></svg>导入 1<i>(imp1) {imp1}</i></li>
        <li class="l3"><svg class="tw"></svg><svg class="i"><use href="#t-fin"/></svg>形成联合体<i>(fin) {fin}</i></li>
        <li class="l2"><svg class="tw"><use href="#open-tw"/></svg><svg class="i"><use href="#t-mat"/></svg>材料</li>
        <li class="l3"><svg class="tw"><use href="#shut-tw"/></svg><svg class="i"><use href="#t-mat"/></svg>Air<i>(mat1) {mat1}</i></li>
        <li class="l2"><svg class="tw"><use href="#open-tw"/></svg><svg class="i"><use href="#t-ht"/></svg>流体传热<i>(ht) {ht}</i></li>
        <li class="l3"><svg class="tw"><use href="#open-tw"/></svg><svg class="i"><use href="#t-dd"/></svg>流体 1<i>{fluid1}</i></li>
        <li class="l4"><svg class="tw"><use href="#shut-tw"/></svg><svg class="i"><use href="#t-dom"/></svg>压力功 1<i>{pw1}</i></li>
        <li class="l4"><svg class="tw"></svg><svg class="i"><use href="#t-eqv"/></svg>方程视图<i>{info}</i></li>
        <li class="l3"><svg class="tw"><use href="#shut-tw"/></svg><svg class="i"><use href="#t-dd"/></svg>初始值 1<i>{init1}</i></li>
        <li class="l3"><svg class="tw"><use href="#shut-tw"/></svg><svg class="i"><use href="#t-bd"/></svg>轴对称 1<i>{axi1}</i></li>
        <li class="l3"><svg class="tw"><use href="#shut-tw"/></svg><svg class="i"><use href="#t-bd"/></svg>热绝缘 1<i>{ins1}</i></li>
        <li class="l3"><svg class="tw"><use href="#shut-tw"/></svg><svg class="i"><use href="#t-dom"/></svg>热源 1<i>{hs1}</i></li>
        <li class="l3"><svg class="tw"></svg><svg class="i"><use href="#t-eqv"/></svg>方程视图<i>{info}</i></li>
        <li class="l2"><svg class="tw"><use href="#open-tw"/></svg><svg class="i"><use href="#t-du"/></svg>系数形式偏微分方程<i>(c) {c}</i></li>
        <li class="l3"><svg class="tw"><use href="#shut-tw"/></svg><svg class="i"><use href="#t-dd"/></svg>系数形式偏微分方程 1<i>{cfeq1}</i></li>
        <li class="l3"><svg class="tw"><use href="#shut-tw"/></svg><svg class="i"><use href="#t-bd"/></svg>零通量 1<i>{zflx1}</i></li>
        <li class="l3"><svg class="tw"><use href="#shut-tw"/></svg><svg class="i"><use href="#t-dd"/></svg>初始值 1<i>{init1}</i></li>
        <li class="l3"><svg class="tw"></svg><svg class="i"><use href="#t-eqv"/></svg>方程视图<i>{info}</i></li>
        <li class="l2"><svg class="tw"></svg><svg class="i"><use href="#t-mesh"/></svg>网格 1<i>{mesh1}</i></li>
        <li class="l1"><svg class="tw"><use href="#open-tw"/></svg><svg class="i"><use href="#t-std"/></svg>研究：热力学分析<i>{std1}</i></li>
        <li class="l2"><svg class="tw"></svg><svg class="i"><use href="#t-time"/></svg>步骤 1: 瞬态<i>{time}</i></li>
        <li class="l2"><svg class="tw"><use href="#shut-tw"/></svg><svg class="i"><use href="#t-solv"/></svg>求解器配置</li>
        <li class="l1"><svg class="tw"><use href="#open-tw"/></svg><svg class="i"><use href="#t-res"/></svg>结果</li>
        <li class="l2"><svg class="tw"><use href="#shut-tw"/></svg><svg class="i"><use href="#t-data"/></svg>数据集</li>
      </ul>
      <div class="vs"><svg viewBox="0 0 17 17"><path d="M5 10.500L8.500 7l3.500 3.500"/></svg><div></div><span></span><svg viewBox="0 0 17 17"><path d="M5 7l3.500 3.500L12 7"/></svg></div>
      <div class="hs"><svg viewBox="0 0 17 17"><path d="M10.500 5L7 8.500l3.500 3.500"/></svg><div></div><span></span><svg viewBox="0 0 17 17"><path d="M7 5l3.500 3.500L7 12"/></svg></div>
      <div class="corner"></div>
    </div>
  </section>

  <section class="panel settings">
    <div class="head"><h2>设置</h2><svg class="car"><use href="#caret"/></svg><svg class="pin"><use href="#pin"/></svg></div>
    <h3>变量</h3>
    <div class="label"><span>标签:</span><div class="input">变量 1</div><div class="go"><svg class="i"><use href="#goto"/></svg></div></div>
    <div class="sec">几何实体选择</div>
    <div class="level"><span>几何实体层:</span><div class="select">整个模型<svg class="car"><use href="#caret"/></svg></div></div>
    <div class="toggle"><svg viewBox="0 0 30 14"><rect x=".7" y=".7" width="28.600" height="12.600" rx="1.500" fill="#dce9e0" stroke="#4b5f75" stroke-width="1.200"/><path d="M6 4h12v6H6a3 3 0 010-6z" fill="#4ea83c"/><rect x="18.500" y="2.500" width="9" height="9" fill="#b0b0b0" stroke="#4b5f75"/></svg></div>
    <div class="sec open"><svg class="car"><use href="#caret"/></svg>变量</div>
    <div class="vars">
      <table>
        <colgroup><col class="c1"><col class="c2"><col class="c3"><col class="c4"></colgroup>
        <tr><th><svg class="ff" viewBox="0 0 10 8"><path d="M0 0l5 4-5 4zM5 0l5 4-5 4z"/></svg>名称</th><th>表达式</th><th>单位</th><th>描述</th></tr>
        <tr><td>rp</td><td>40[mm]</td><td>m</td><td>活塞半径</td></tr>
        <tr><td>rc</td><td>40[mm]</td><td>m</td><td>曲柄半径</td></tr>
        <tr><td>l</td><td>200[mm]</td><td>m</td><td>连杆长度</td></tr>
        <tr><td>omega</td><td>(1000*2*pi/60)[rad/s]</td><td>rad/s</td><td>曲轴的角速度</td></tr>
        <tr><td>theta</td><td>omega*t</td><td>rad</td><td>曲轴旋转</td></tr>
        <tr><td>xp</td><td class="wide">-rc*cos(theta)+sqrt(l^2-(rc*si...</td><td>m</td><td>活塞位移</td></tr>
        <tr><td>V0</td><td>intop1(2*pi*r)</td><td>m³</td><td>初始气缸容积</td></tr>
        <tr><td>V</td><td class="wide">V0-pi*rp^2*xp</td><td>m³</td><td>当前气缸容积</td></tr>
        <tr><td>rho0</td><td class="wide">1.1886[kg/m^3]</td><td>kg/m³</td><td>STP 处的空气密度</td></tr>
        <tr><td>m</td><td>rho0*V0</td><td>kg</td><td>空气的质量</td></tr>
        <tr><td>R_air</td><td>287[J/kg/K]</td><td>J/(kg·K)</td><td>空气比气体常数</td></tr>
        <tr><td>Q</td><td>600[J]</td><td>J</td><td>燃烧过程中产生的热量</td></tr>
        <tr><td>Pi</td><td class="mid">Q*omega/(pi[rad]/20)*rect1(t...</td><td>W</td><td>功率输入</td></tr>
        <tr><td>Po</td><td class="edit">intop2(p*2*pi*r*d(xp,t)*root.nz)</td><td>W</td><td>功率输出</td></tr>
        <tr><td></td><td></td><td></td><td></td></tr>
      </table>
    </div>
    <div class="bar">
      <svg class="i"><use href="#f-u"/></svg><svg class="i"><use href="#f-d"/></svg><svg class="i"><use href="#m-ins"/></svg><svg class="car"><use href="#caret"/></svg><svg class="i"><use href="#m-add"/></svg><svg class="i"><use href="#m-del"/></svg><svg class="i"><use href="#broom"/></svg><svg class="i or"><use href="#open"/></svg><svg class="i blc"><use href="#save"/></svg><svg class="i"><use href="#m-ren"/></svg><svg class="car"><use href="#caret"/></svg>
    </div>
    <div class="form">
      <label>名称:</label><div class="input">Po</div>
      <label>表达式:</label><div class="input tight">intop2(p*2*pi*r*d(xp,t)*root.nz)</div>
      <label>描述:</label><div class="input">功率输出</div>
    </div>
    <div class="mark mark-row"></div>
    <div class="mark mark-form"></div>
  </section>

  <div class="right">
    <section class="panel graphics">
      <div class="ptabs"><span class="on">图形</span><span>函数图<s></s></span><span>收敛图 1<s></s></span><svg class="car"><use href="#caret"/></svg><svg class="pin"><use href="#pin"/></svg></div>
      <div class="bar">
        <svg class="i"><use href="#g-zi"/></svg><svg class="i"><use href="#g-zo"/></svg><svg class="i"><use href="#g-zb"/></svg><svg class="car"><use href="#caret"/></svg><svg class="i"><use href="#g-ext"/></svg><svg class="i"><use href="#g-fit"/></svg><hr><svg class="i"><use href="#g-axis"/></svg><svg class="car"><use href="#caret"/></svg><hr><svg class="i"><use href="#t-dom"/></svg><svg class="car"><use href="#caret"/></svg><hr><svg class="i lg"><use href="#g-lock"/></svg><svg class="car dim"><use href="#caret"/></svg><svg class="i gy"><use href="#g-lock"/></svg><svg class="car dim"><use href="#caret"/></svg><svg class="i"><use href="#sel"/></svg><svg class="i"><use href="#desel"/></svg><hr><svg class="i"><use href="#g-hide"/></svg><svg class="i"><use href="#g-reset"/></svg><svg class="i"><use href="#g-eye"/></svg><svg class="car"><use href="#caret"/></svg><hr><b class="down"><svg class="i"><use href="#g-grid"/></svg></b><hr><svg class="i"><use href="#g-clr"/></svg><svg class="i"><use href="#g-pal"/></svg><svg class="car"><use href="#caret"/></svg><hr><svg class="i"><use href="#g-shut"/></svg><svg class="car"><use href="#caret"/></svg><svg class="i"><use href="#g-cam"/></svg><svg class="i"><use href="#g-prn"/></svg>
      </div>
      <svg class="plot" viewBox="876 207 856 584">
        <path d="M876 207h856v584H876z" fill="#fff"/>
        <path d="M1083.300 215v553" stroke="#c4c4c4" stroke-width="1.500" stroke-dasharray="14 3 2 3"/>
        <path class="solid" d="M1083.500 239.500H1294.500V252h16.500l2-5h10.500l3 4.500V296H1297.500q-3.500 2-3.500 6.500l9.500 8V338q0 2-4 3t-5 4V603q0 2 3 2h3.500V660q0 1-3 1.500t-3.500 4V730l-9 25.500h-14V737l-19 28.500h-94v-42h-75"/>
        <path d="M1083.500 240v483" stroke="#888"/>
        <path d="M1083.500 250v473" stroke="#111" stroke-dasharray="3 2 3 13.300"/>
        <path class="ln" d="M1271.500 239.500V755"/>
        <path d="M1271 676.500h-17.500q-4 1-4 6t4 5.500h17.500zM1271 704.500h-17.500q-4 1-4 6t4 5.500h17.500z" fill="#fff"/>
        <path class="ln" d="M1083.500 653c30 3 55 14 75 24 8 5 20 4 28 0 8-5 13-13 14-24 3-7 8-14 17-14h46q7 0 7.500 9"/>
        <path class="ln" d="M1271.500 672q0 4.500-3 4.500h-15q-4 1-4 6t4 5.500h15q3 0 3 4m0 8q0 4.500-3 4.500h-15q-4 1-4 6t4 5.500h15q3 0 3 4"/>
        <path class="frame" d="M927 215h796v553H927zM990 207v8m93.500-8v8m93.500-8v8m94-8v8m93-8v8m94-8v8m94-8v8m93-8v8M990 768v7m93.500-7v7m93.500-7v7m94-7v7m93-7v7m94-7v7m94-7v7m93-7v7"/>
        <path class="frame" d="M919 232h8m-8 46.500h8m-8 46.500h8m-8 47h8m-8 47h8m-8 47h8m-8 47h8m-8 46h8m-8 47h8m-8 47h8m-8 47h8m-8 47h8M1723 232h8m-8 46.500h8m-8 46.500h8m-8 47h8m-8 47h8m-8 47h8m-8 47h8m-8 46h8m-8 47h8m-8 47h8m-8 47h8m-8 47h8"/>
        <path d="M927 768l6.500 5h-13zM922 528.500l5 5.500-5 5.500z"/>
        <g class="yl"><text x="918" y="242">0.16</text><text x="918" y="288">0.15</text><text x="918" y="335">0.14</text><text x="918" y="382">0.13</text><text x="918" y="429">0.12</text><text x="918" y="476">0.11</text><text x="918" y="523">0.1</text><text x="918" y="569">0.09</text><text x="918" y="616">0.08</text><text x="918" y="663">0.07</text><text x="918" y="710">0.06</text><text x="918" y="757">0.05</text></g>
        <g class="xl"><text x="991" y="786">-0.02</text><text x="1084" y="786">0</text><text x="1178" y="786">0.02</text><text x="1272" y="786">0.04</text><text x="1365" y="786">0.06</text><text x="1459" y="786">0.08</text><text x="1553" y="786">0.1</text><text x="1646" y="786">0.12</text><text x="931" y="226" font-size="11">m</text><text x="1707" y="763" font-size="11">m</text><text x="1085" y="764" fill="#a8a8a8" textLength="23">r=0</text></g>
        <svg x="1699" y="220" width="18" height="19"><use href="#logo"/></svg>
      </svg>
    </section>
    <section class="panel table">
      <div class="ptabs"><span>消息<s></s></span><span>进度</span><span>日志</span><span class="on">表格 1<s></s></span><svg class="car"><use href="#caret"/></svg><svg class="pin"><use href="#pin"/></svg></div>
      <div class="bar">
        <svg class="i"><use href="#b-full"/></svg><hr><b class="n">8.85<br>e-12</b><b class="down auto">AUTO</b><b class="n">8.5<br>e-1</b><b class="n">850<br>e-3</b><b class="n">0.85</b><hr><b class="down"><svg class="i"><use href="#b-tab"/></svg></b><svg class="i"><use href="#b-pol"/></svg><hr><svg class="i"><use href="#broom"/></svg><svg class="i"><use href="#trash"/></svg><svg class="i"><use href="#b-tg"/></svg><svg class="i"><use href="#b-sq"/></svg><svg class="i"><use href="#b-cont"/></svg><svg class="i"><use href="#b-copy"/></svg><svg class="i"><use href="#b-exp"/></svg><svg class="i"><use href="#b-dup"/></svg><svg class="i"><use href="#b-grid"/></svg><svg class="car"><use href="#caret"/></svg>
      </div>
      <div class="grid"><div class="gh"><span>Time (s)</span><span>机械能 (J)</span></div><div class="gr"><span>0.060000</span><span>338.59</span></div></div>
    </section>
  </div>
</main>
<footer class="status"><span>792 MB</span><span>1697 MB</span></footer>
</body>
</html>
```
FILE: styles.css
```css
* { box-sizing: border-box; margin: 0; padding: 0; }
body { width: 1740px; height: 1027px; overflow: hidden; display: flex; flex-direction: column; background: #fafbff; color: #000; font: 12px/16px "Noto Sans", "Noto Sans CJK SC", sans-serif; white-space: nowrap; }
svg { display: block; flex: none; }
.grads { position: absolute; width: 0; height: 0; }
.defs { display: none; }
.i { width: 16px; height: 16px; }
.car { width: 9px; height: 16px; }
.pin { width: 10px; height: 16px; color: #555; }
.mg { fill: #b4529f; font-family: "Noto Sans", sans-serif; }
.bl { fill: #368ccb; }
.it { font-style: italic; }
.dk { fill: #3f6ea8; }
.blc { color: #368ccb; }
.gy { color: #999; }
.lg { color: #c2c2c2; }
.or { fill: #f0942c; }
.dim { fill: #666; }

.titlebar { height: 23px; flex: none; display: flex; background: #9c5b68; }
.quick { display: flex; gap: 8px; margin-left: 14px; padding: 3px 6px 0 7px; width: 341px; border-left: 1px solid #c39aa3; }
.quick .i { background: radial-gradient(closest-side, #ffffffe0 30%, #ffffff00 100%); }
.titlebar .car { margin-top: 3px; }
.titlebar h1 { flex: 1; padding-left: 529px; font: 12px/16px "Noto Sans", "Noto Sans CJK SC", sans-serif; padding-top: 5px; letter-spacing: .2px; }
.titlebar h1 span { display: inline-block; background: #c79ea7; box-shadow: 0 0 5px 3px #c79ea7; height: 15px; }
.win { width: 110px; height: 23px; margin-right: 14px; }

.tabs { height: 24px; flex: none; margin: 3px 7px 0 7px; background: #ececee; display: flex; line-height: 23px; border-left: 1px solid #fafbff; }
.tabs span { padding: 0 9px; }
.tabs b { font-weight: 400; color: #fff; text-align: center; }
.tabs .file { background: #368ccb; width: 55px; height: 22px; margin: 1px 1px 0 0; line-height: 25px; }
.tabs .on { background: #fafbff; color: #2f8fdc; margin-top: 1px; line-height: 21px; }
.tabs .help { background: #368ccb; width: 16px; height: 16px; line-height: 16px; margin: 3px 3px 0 auto; font-size: 14px; }

.ribbon { height: 91px; flex: none; margin: 0 7px; border: 1px solid #d4d5d9; border-top: 0; display: flex; }
.grp { display: flex; flex-direction: column; height: 90px; position: relative; }
.grp::after { content: ""; position: absolute; right: 0; top: 8px; bottom: 7px; width: 1px; background: #d4d5d9; }
.body { display: flex; height: 74px; flex: none; padding-left: 7px; }
.grp footer { text-align: center; color: #6d6d6d; line-height: 16px; }
.g1 { width: 500px; }
.g2 { width: 57px; }
.g3 { width: 273px; } .g3 .body { padding-left: 9px; }
.g4 { width: 286px; }
.g5 { width: 145px; }
.g6 { width: 57px; }
.g7 { width: 67px; } .g8 { width: 93px; } .g7 .body, .g8 .body { padding-left: 1px; }
.btn { display: flex; flex-direction: column; align-items: center; padding-top: 5px; line-height: 14px; }
.btn > svg:first-child { width: 32px; height: 32px; margin-bottom: 3px; }
.btn .car { width: 7px; height: 12px; margin-top: 1px; }
.btn em { font-style: normal; display: flex; gap: 3px; margin-top: -1px; }
.off { color: #a9a9ab; fill: #a9a9ab; }
.w44 { width: 44px; } .w66 { width: 66px; } .w69 { width: 69px; } .w90 { width: 91px; } .w102 { width: 102px; }
.body hr { border: 0; width: 1px; background: #d4d5d9; height: 60px; margin-top: 8px; flex: none; }
.col { padding: 4px 0 0 2px; }
.col p { display: flex; align-items: center; gap: 2px; height: 22px; line-height: 16px; padding-bottom: 4px; }
.ca { width: 74px; padding-left: 0; } .cb { width: 70px; padding-left: 1px; } .cc { width: 72px; }

main { display: flex; gap: 5px; margin: 4px 7px 0; height: 845px; flex: none; }
.panel { border: 1px solid #d4d5d9; }
.bar { display: flex; align-items: center; }
.bar > .i, .bar > b { flex: none; width: 23px; }
.bar > .i { padding: 0 3.500px; }
.bar > .car { width: 18px; padding: 0 7px 0 2px; height: 16px; }
.bar > hr { width: 1px; height: 17px; border: 0; background: #d4d5d9; margin: 0 3px 0 4px; flex: none; }
.head { display: flex; height: 30px; padding-top: 9px; }
.head h2 { font: 300 21px/14px "Noto Sans CJK SC", sans-serif; flex: 1; }
.head .pin { margin-left: 4px; }
.builder { width: 378px; }
.builder .head { padding-left: 7px; padding-right: 3px; fill: #555; }
.builder h2 { color: #2b579a; }
.builder .bar { height: 25px; padding: 0 0 2px 3px; }
.tree { margin: 0 4px; height: 780px; border: 1px solid #d0d1d5; display: grid; grid-template: 761px 17px / 349px 17px; background: #fff; }
.tree ul { list-style: none; overflow: hidden; }
.tree li { height: 20px; display: flex; align-items: center; line-height: 18px; padding-top: 2px; }
.tree li .i { margin: 0 6px 2px 6px; }
.tree .tw { width: 10px; height: 16px; margin-bottom: 2px; }
.tree i { margin-left: 8px; letter-spacing: .15px; font-style: normal; transform: skewX(-15deg); }
.rw { letter-spacing: .1px; }
.l0 { padding-left: 4px; } .l1 { padding-left: 24px; } .l2 { padding-left: 44px; } .l3 { padding-left: 64px; } .l4 { padding-left: 84px; }
.sel { background: #d9d9dc; }
.vs, .hs { display: flex; background: #fff; }
.vs { flex-direction: column; }
.vs svg, .hs svg { width: 17px; height: 17px; background: #f6f6f6; fill: none; stroke: #bbb; }
.vs div { height: 564px; background: #e7e7e7; } .hs div { width: 289px; background: #e7e7e7; }
.vs span, .hs span { flex: 1; }
.corner { background: #f0f0f0; }

.settings { width: 480px; border-color: #9ccef5; position: relative; }
.settings .head { padding-left: 7px; padding-right: 3px; fill: #368ccb; }
.settings .head .pin { color: #368ccb; }
.settings h2, .settings h3 { color: #1e90e8; }
.settings h3 { font: 300 14.500px/26px "Noto Sans CJK SC", sans-serif; padding-left: 6px; height: 33px; }
.label { display: flex; align-items: center; height: 22px; padding: 0 5px; }
.label span { width: 37px; padding-top: 1px; }
.input { border: 1px solid #d0d1d5; background: #fff; height: 20px; line-height: 18px; padding-left: 2px; }
.label .input { width: 403px; }
.go { width: 20px; height: 22px; margin-left: 8px; border: 1px solid #ccc; border-radius: 2px; background: #f2f2f3; padding: 2px 1px; }
.sec { height: 26px; background: #dee8f4; margin-top: 9px; padding-left: 25px; font-size: 13px; line-height: 24px; }
.level { display: flex; align-items: center; margin-top: 9px; height: 21px; padding: 0 5px; }
.level span { width: 73px; }
.select { flex: 1; height: 21px; border: 1px solid #c8c9cc; border-radius: 2px; background: linear-gradient(#f3f3f4, #e8e8e9); padding: 0 5px 0 12px; display: flex; justify-content: space-between; align-items: center; }
.toggle { width: 39px; height: 39px; margin: 6px 0 0 5px; border: 1.500px solid #1e90e8; border-radius: 2px; background: #9dcffa; padding: 12px 3px; }
.toggle svg { width: 30px; height: 14px; }
.sec.open { margin-top: 7px; display: flex; align-items: center; padding: 0 0 2px 5px; gap: 12px; fill: #444; }
.vars { margin: 9px 5px 0; height: 350px; width: 468px; border: 1px solid #c8c8ca; border-bottom: 3px solid #d4d4d6; background: #fff; }
table { border-collapse: separate; border-spacing: 0; table-layout: fixed; width: 466px; }
.c1 { width: 70px; } .c2 { width: 186px; } .c3 { width: 60px; } .c4 { width: 150px; }
th, td { border-right: 1px solid #a8a8a8; font-weight: 400; text-align: left; overflow: hidden; }
th { height: 28px; background: #efefef; padding: 7px 0 0 5px; line-height: 20px; vertical-align: top; }
th:first-child { padding-left: 18px; position: relative; }
.ff { position: absolute; left: 4px; top: 3px; width: 9px; height: 8px; }
td { height: 21px; border-bottom: 1px solid #a8a8a8; line-height: 20px; padding-left: 3px; }
td:nth-child(3) { background: #f8f8f8; }
td.edit { box-shadow: inset 0 0 0 1px #1e90e8; }
.edit, .tight { letter-spacing: -.1px; }
.wide { letter-spacing: .24px; }
.mid { letter-spacing: .1px; }
.settings .bar { height: 28px; padding-left: 4px; }
.form { padding: 0 5px; }
.form label { display: block; height: 22px; line-height: 16px; }
.form .input { margin-bottom: 7px; }
.mark { position: absolute; border: 2px solid #ee1c25; }
.mark-row { left: -1px; top: 534px; width: 477px; height: 32px; }
.mark-form { left: -4px; top: 609px; width: 209px; height: 159px; }

.right { display: flex; flex-direction: column; gap: 5px; width: 858px; }
.graphics { height: 647px; }
.table { height: 193px; }
.ptabs { display: flex; height: 31px; border-bottom: 1px solid #d4d5d9; padding: 5px 3px 0 4px; gap: 8px; font-size: 13px; line-height: 25px; }
.ptabs span { height: 25px; background: #ececee; padding: 0 4px; display: flex; }
.ptabs .on { background: #fafbff; border: 1px solid #d4d5d9; border-bottom: 0; height: 26px; color: #2b579a; line-height: 24px; }
.ptabs s { width: 9px; height: 9px; margin: 7px 2px 0 9px; background: linear-gradient(45deg, #0000 46%, #c5c9d3 46% 54%, #0000 54%), linear-gradient(-45deg, #0000 46%, #c5c9d3 46% 54%, #0000 54%); }
.ptabs .car { margin: 8px 0 0 auto; fill: #444; }
.ptabs .pin { margin: 9px 0 0 -4px; }
.graphics .bar { height: 30px; padding: 3px 0 0 3px; }
.plot { width: 856px; height: 584px; font-family: "DejaVu Sans", sans-serif; font-size: 12px; }
.solid { fill: #c8c8c8; stroke: #111; }
.ln { fill: none; stroke: #111; }
.frame { fill: none; stroke: #777; stroke-width: 1.600; }
.yl { text-anchor: end; }
.down { display: flex; justify-content: center; align-items: center; height: 20px; border: 1px solid #1e90e8; border-radius: 2px; background: #9dcffa; }
.bar > .down { width: 21px; margin: 0 1px; }
.n, .auto { font: 400 9px/11px "Noto Sans", sans-serif; color: #368ccb; text-align: center; letter-spacing: -.3px; }
.bar > .auto { font-size: 7px; letter-spacing: 0; color: #1f78c4; }
.table .bar { height: 36px; padding: 0 0 2px 7px; }
.grid { margin: -3px 8px 0 9px; height: 121px; border: 1px solid #d4d5d9; background: #fbfcff; }
.gh, .gr { display: flex; }
.gh { height: 28px; background: #efefef; border-right: 1px solid #a8a8a8; line-height: 34px; }
.gh span { border-right: 1px solid #a8a8a8; padding-left: 5px; }
.gh span:nth-child(1), .gr span:nth-child(1) { width: 57px; }
.gh span:nth-child(2), .gr span:nth-child(2) { width: 64px; }
.gr { height: 20px; border-bottom: 1px solid #a8a8a8; background: #fafafa; }
.gr span { border: 1px solid #5aaeee; background: #d9ebf7; line-height: 17px; padding-left: 0; letter-spacing: .05px; }
.status { display: flex; margin: 13px 0 0 1057px; line-height: 16px; letter-spacing: .35px; }
.status span + span { border-left: 1px solid #000; margin-left: 5px; padding-left: 5px; height: 14px; line-height: 15px; }
```
